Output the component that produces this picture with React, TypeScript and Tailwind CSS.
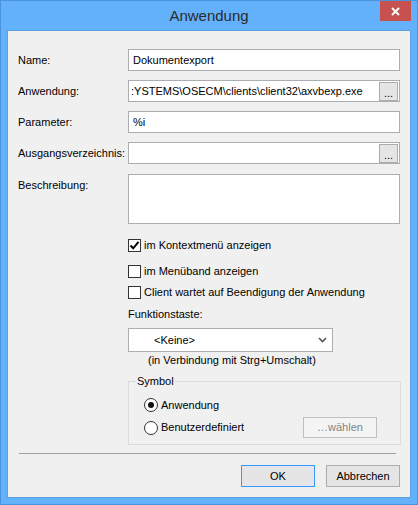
import React from "react";

const font = { fontFamily: '"Liberation Sans", Arial, sans-serif' };

function Field({ label, children }: { label: string; children: React.ReactNode }) {
  return (
    <div className="flex h-[22px] items-center">
      <span className="w-[110px]">{label}</span>
      {children}
    </div>
  );
}

function TextBox({ value, browse, pad = 4 }: { value?: string; browse?: boolean; pad?: number }) {
  return (
    <div className="flex h-[22px] w-[272px] items-center border border-[#abadb3] bg-white pr-[1px]" style={{ paddingLeft: pad }}>
      <span className="min-w-0 flex-1 whitespace-nowrap">{value}</span>
      {browse ? (
        <div className="ml-[4px] flex h-[19px] w-[19px] flex-none items-end justify-center border border-[#acacac] bg-[#e5e5e5] pb-[3px] text-[11px] leading-[8px]">
          ...
        </div>
      ) : null}
    </div>
  );
}

function CheckBox({ checked, label }: { checked?: boolean; label: string }) {
  return (
    <div className="flex h-[13px] items-center">
      <div className="flex h-[13px] w-[13px] items-center justify-center border border-[#333] bg-white">
        {checked ? (
          <svg width="11" height="11" viewBox="0 0 11 11">
            <path d="M1.5 5.5 L4.2 8.3 L9.5 1.8" fill="none" stroke="#000" strokeWidth="2" />
          </svg>
        ) : null}
      </div>
      <span className="ml-[3px]">{label}</span>
    </div>
  );
}

function Radio({ checked, label }: { checked?: boolean; label: string }) {
  return (
    <div className="flex items-center">
      <div className="flex h-[14px] w-[14px] items-center justify-center rounded-full border border-[#333] bg-white">
        {checked ? <div className="h-[6px] w-[6px] rounded-full bg-[#111]" /> : null}
      </div>
      <span className="ml-[3px]">{label}</span>
    </div>
  );
}

export default function App() {
  return (
    <div className="h-[505px] w-[418px] border border-[#4d93da] bg-[#63b1fb] text-[11px] leading-[13px] text-black" style={font}>
      <div className="relative flex h-[29px] items-center justify-center pb-[1px]">
        <span className="text-[15px] text-[#2b2b2b]">Anwendung</span>
        <div className="absolute right-[6px] top-0 flex h-[20px] w-[31px] items-center justify-center bg-[#c75050]">
          <svg width="9" height="9" viewBox="0 0 9 9">
            <path d="M1 1 L8 8 M8 1 L1 8" stroke="#fff" strokeWidth="2" />
          </svg>
        </div>
      </div>

      <div className="mx-[6px] flex h-[468px] flex-col border border-[#5aa1e8] bg-[#f0f0f0] px-[10px] pt-[18px]">
        <div className="flex flex-col gap-[9px]">
          <Field label="Name:">
            <TextBox value="Dokumentexport" />
          </Field>
          <Field label="Anwendung:">
            <TextBox value=":YSTEMS\OSECM\clients\client32\axvbexp.exe" browse pad={2} />
          </Field>
          <Field label="Parameter:">
            <TextBox value="%i" />
          </Field>
          <Field label="Ausgangsverzeichnis:">
            <TextBox browse />
          </Field>
        </div>

        <div className="mt-[10px] flex">
          <span className="w-[110px] pt-[5px]">Beschreibung:</span>
          <div className="h-[50px] w-[272px] border border-[#abadb3] bg-white" />
        </div>

        <div className="ml-[110px] flex flex-col">
          <div className="mt-[15px]">
            <CheckBox checked label="im Kontextmenü anzeigen" />
          </div>
          <div className="mt-[13px]">
            <CheckBox label="im Menüband anzeigen" />
          </div>
          <div className="mt-[8px]">
            <CheckBox label="Client wartet auf Beendigung der Anwendung" />
          </div>

          <span className="mt-[9px]">Funktionstaste:</span>
          <div className="mt-[7px] flex h-[24px] w-[205px] items-center border border-[#abadb3] bg-white pl-[25px] pr-[5px]">
            <span className="flex-1">&lt;Keine&gt;</span>
            <svg width="9" height="6" viewBox="0 0 9 6">
              <path d="M1 1 L4.5 4.5 L8 1" fill="none" stroke="#555" strokeWidth="1.6" />
            </svg>
          </div>
          <span className="ml-[20px] mt-[2px]">(in Verbindung mit Strg+Umschalt)</span>

          <fieldset className="mt-[8px] w-[273px] border border-[#dcdcdc] pb-[6px] pl-[7px] pr-[15px]">
            <legend className="px-[1px]">Symbol</legend>
            <div className="ml-[8px] mt-[10px]">
              <Radio checked label="Anwendung" />
            </div>
            <div className="ml-[8px] mt-[5px] flex h-[21px] items-center justify-between pr-[8px]">
              <Radio label="Benutzerdefiniert" />
              <div className="flex h-[21px] w-[74px] items-center justify-center border border-[#bfbfbf] bg-[#f4f4f4] text-[#838383]">
                …wählen
              </div>
            </div>
          </fieldset>
        </div>

        <div className="ml-px mr-[4px] mt-[8px] h-px bg-[#a0a0a0]" />

        <div className="mt-[11px] flex justify-end gap-[11px]">
          <div className="flex h-[22px] w-[74px] items-center justify-center border border-[#3399ff] bg-[#e5e5e5]">
            OK
          </div>
          <div className="flex h-[22px] w-[74px] items-center justify-center border border-[#acacac] bg-[#e5e5e5]">
            Abbrechen
          </div>
        </div>
      </div>
    </div>
  );
}
